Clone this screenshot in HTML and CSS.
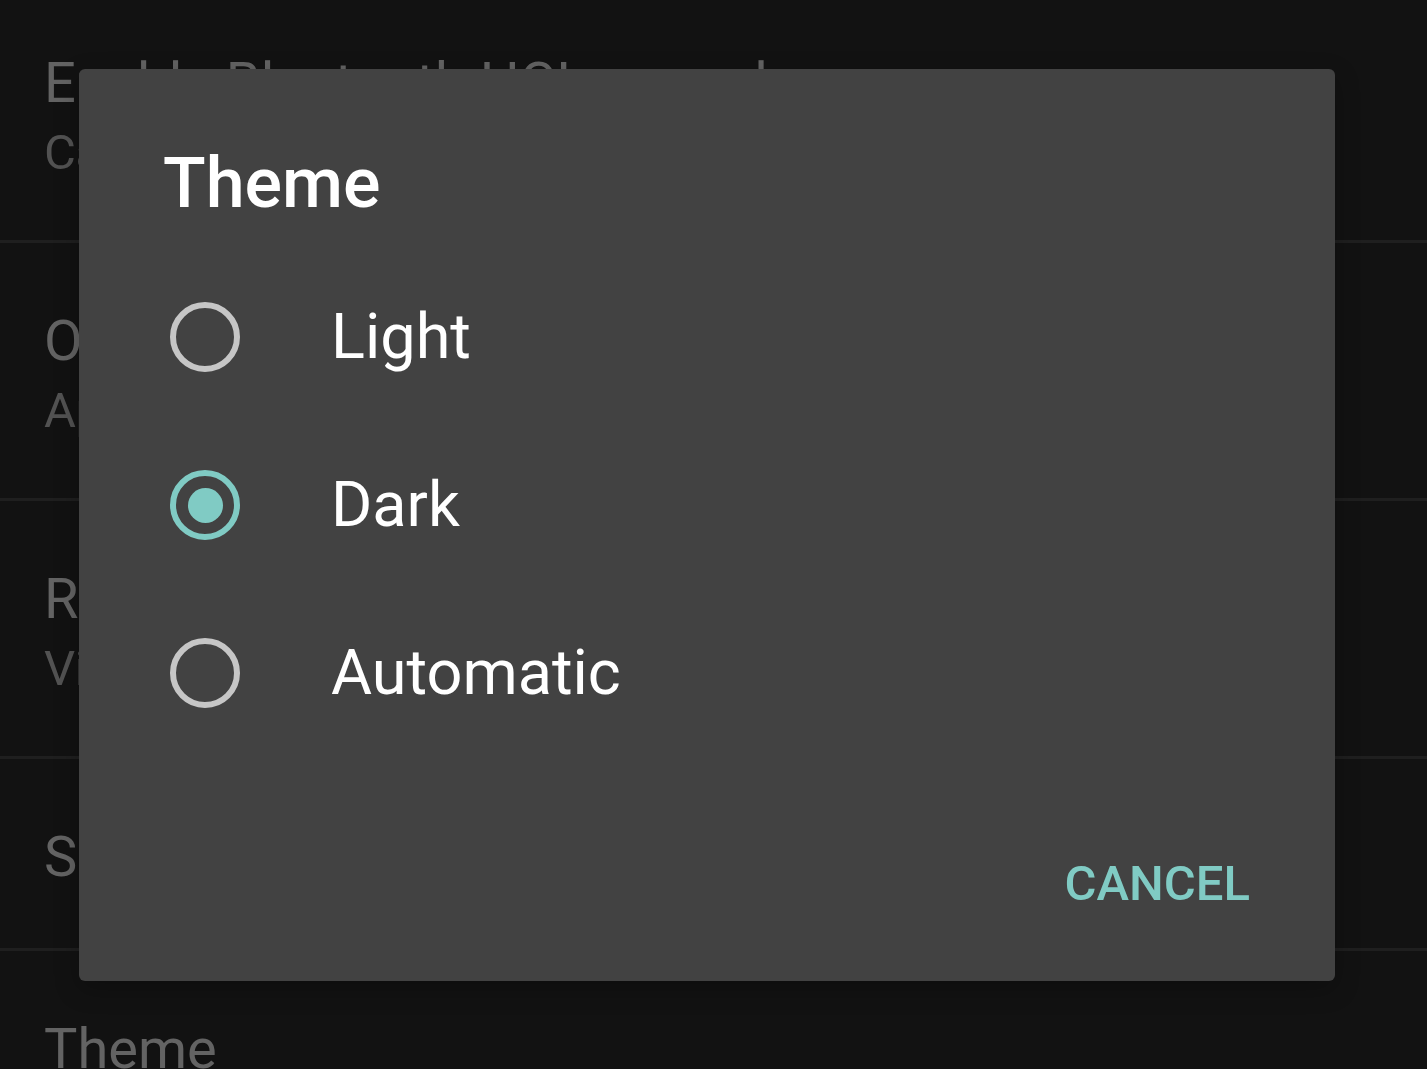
FILE: index.html
```html
<!DOCTYPE html>
<html lang="en">
<head>
<meta charset="utf-8">
<title>Theme</title>
<link rel="stylesheet" href="styles.css">
</head>
<body>
  <ul class="settings">
    <li class="pref">
      <div class="pref-title">Enable Bluetooth HCI snoop log</div>
      <div class="pref-summary">Capture all Bluetooth HCI packets in a file</div>
    </li>
    <li class="pref">
      <div class="pref-title">Open source licenses</div>
      <div class="pref-summary">Apache License 2.0</div>
    </li>
    <li class="pref">
      <div class="pref-title">Report an issue</div>
      <div class="pref-summary">Visit the issue tracker</div>
    </li>
    <li class="pref">
      <div class="pref-title">Source code</div>
    </li>
    <li class="pref">
      <div class="pref-title">Theme</div>
      <div class="pref-summary">Dark</div>
    </li>
  </ul>

  <div class="scrim">
    <div class="dialog" role="dialog">
      <h1 class="dialog-title">Theme</h1>
      <div class="choices">
        <div class="choice">
          <span class="radio"></span>
          <span class="choice-label">Light</span>
        </div>
        <div class="choice">
          <span class="radio radio-on"></span>
          <span class="choice-label">Dark</span>
        </div>
        <div class="choice">
          <span class="radio"></span>
          <span class="choice-label">Automatic</span>
        </div>
      </div>
      <div class="actions">
        <button class="btn-text">CANCEL</button>
      </div>
    </div>
  </div>
</body>
</html>
```
FILE: styles.css
```css
html, body {
  margin: 0;
  padding: 0;
}

body {
  background: #121212;
  font-family: Roboto, "Liberation Sans", sans-serif;
  width: 1427px;
  height: 1069px;
  overflow: hidden;
}

.settings {
  list-style: none;
  margin: -15px 0 0 0;
  padding: 0;
}

.pref {
  padding: 65px 44px 58px 44px;
  border-bottom: 3px solid #1f1f1f;
}

.pref-title {
  font-size: 56px;
  line-height: 66px;
  color: #636363;
  white-space: nowrap;
}

.pref-summary {
  margin-top: 8px;
  font-size: 49px;
  line-height: 58px;
  color: #525252;
  white-space: nowrap;
  letter-spacing: -0.5px;
}

.scrim {
  position: fixed;
  inset: 0;
  padding: 69px 0 0 79px;
}

.dialog {
  width: 1256px;
  height: 912px;
  box-sizing: border-box;
  background: #424242;
  border-radius: 6px;
  padding-top: 75px;
  display: flex;
  flex-direction: column;
  box-shadow: 0 8px 24px rgba(0, 0, 0, 0.25);
}

.dialog-title {
  margin: 0;
  padding-left: 84px;
  font-size: 70px;
  line-height: 78px;
  font-weight: 500;
  color: #ffffff;
}

.choices {
  margin-top: 31px;
  display: flex;
  flex-direction: column;
}

.choice {
  height: 168px;
  display: flex;
  align-items: center;
  padding-left: 91px;
}

.radio {
  width: 70px;
  height: 70px;
  box-sizing: border-box;
  border: 6px solid #c6c6c6;
  border-radius: 50%;
  display: flex;
  align-items: center;
  justify-content: center;
  flex: none;
}

.radio-on {
  border-color: #80cbc4;
}

.radio-on::after {
  content: "";
  width: 35px;
  height: 35px;
  border-radius: 50%;
  background: #80cbc4;
}

.choice-label {
  margin-left: 91px;
  font-size: 63px;
  line-height: 72px;
  color: #ffffff;
}

.actions {
  margin-top: 98px;
  display: flex;
  justify-content: flex-end;
  padding-right: 85px;
}

.btn-text {
  background: none;
  border: none;
  padding: 0;
  font-family: Roboto, "Liberation Sans", sans-serif;
  font-size: 49px;
  line-height: 58px;
  font-weight: 500;
  letter-spacing: 0;
  color: #80cbc4;
}
```
